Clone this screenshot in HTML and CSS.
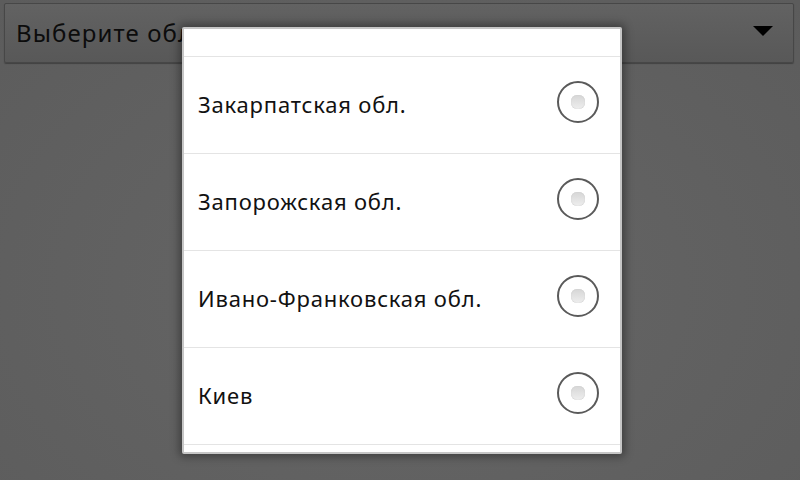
FILE: index.html
```html
<!DOCTYPE html>
<html>
<head>
<meta charset="utf-8">
<link rel="stylesheet" href="styles.css">
</head>
<body>
<div class="screen">
  <div class="spinner">
    <span class="spinner-text">Выберите область</span>
    <svg class="arrow" width="20" height="10" viewBox="0 0 20 10"><polygon points="0,0 20,0 10,10" fill="#000"/></svg>
  </div>
  <div class="dialog">
    <div class="list">
      <div class="row top"></div>
      <div class="row"><span class="label">Закарпатская обл.</span><span class="radio"><span class="dot"></span></span></div>
      <div class="row"><span class="label">Запорожская обл.</span><span class="radio"><span class="dot"></span></span></div>
      <div class="row"><span class="label">Ивано-Франковская обл.</span><span class="radio"><span class="dot"></span></span></div>
      <div class="row"><span class="label">Киев</span><span class="radio"><span class="dot"></span></span></div>
      <div class="row bottom"></div>
    </div>
  </div>
</div>
</body>
</html>
```
FILE: styles.css
```css
html, body {
  margin: 0;
  padding: 0;
  width: 800px;
  height: 480px;
  overflow: hidden;
  font-family: "Noto Sans", "Open Sans", sans-serif;
}
.screen {
  position: relative;
  width: 800px;
  height: 480px;
  background: radial-gradient(ellipse at 50% 60%, #666666 0%, #5f5f5f 70%, #5c5c5c 100%);
  padding: 3px 6px 0 4px;
  box-sizing: border-box;
}
.spinner {
  height: 60px;
  box-sizing: border-box;
  border: 1px solid #474747;
  border-radius: 2px;
  background: linear-gradient(#626262, #585858);
  display: flex;
  align-items: center;
  justify-content: space-between;
  padding: 0 20px 0 11px;
  box-shadow: 0 1px 1px rgba(0,0,0,0.3);
}
.spinner-text {
  font-size: 24px;
  letter-spacing: 1.1px;
  color: #0c0c0c;
  margin-top: -1px;
}
.arrow {
  display: block;
  margin-top: -4px;
}
.dialog {
  position: absolute;
  left: 182px;
  top: 27px;
  width: 440px;
  height: 427px;
  box-sizing: border-box;
  border: 2px solid #c6c6c6;
  border-radius: 2px;
  background: #fff;
  box-shadow: 0 0 8px 3px rgba(0,0,0,0.35);
  overflow: hidden;
}
.list {
  display: flex;
  flex-direction: column;
}
.row {
  border-bottom: 1px solid #e4e4e4;
  display: flex;
  align-items: center;
  justify-content: space-between;
  padding: 0 21px 6px 14px;
  box-sizing: content-box;
  height: 90px;
  flex-shrink: 0;
}
.row.top {
  height: 27px;
  padding: 0;
}
.row.bottom {
  border-bottom: none;
}
.label {
  font-size: 22px;
  letter-spacing: 0.8px;
  color: #111;
  margin-top: 3px;
}
.radio {
  width: 42px;
  height: 42px;
  box-sizing: border-box;
  border: 2px solid #5a5a5a;
  border-radius: 50%;
  display: flex;
  align-items: center;
  justify-content: center;
}
.dot {
  width: 14px;
  height: 14px;
  border-radius: 6px;
  background: linear-gradient(#d6d6d6, #eeeeee);
  box-shadow: inset 0 0 1px #b8b8b8;
}
```
